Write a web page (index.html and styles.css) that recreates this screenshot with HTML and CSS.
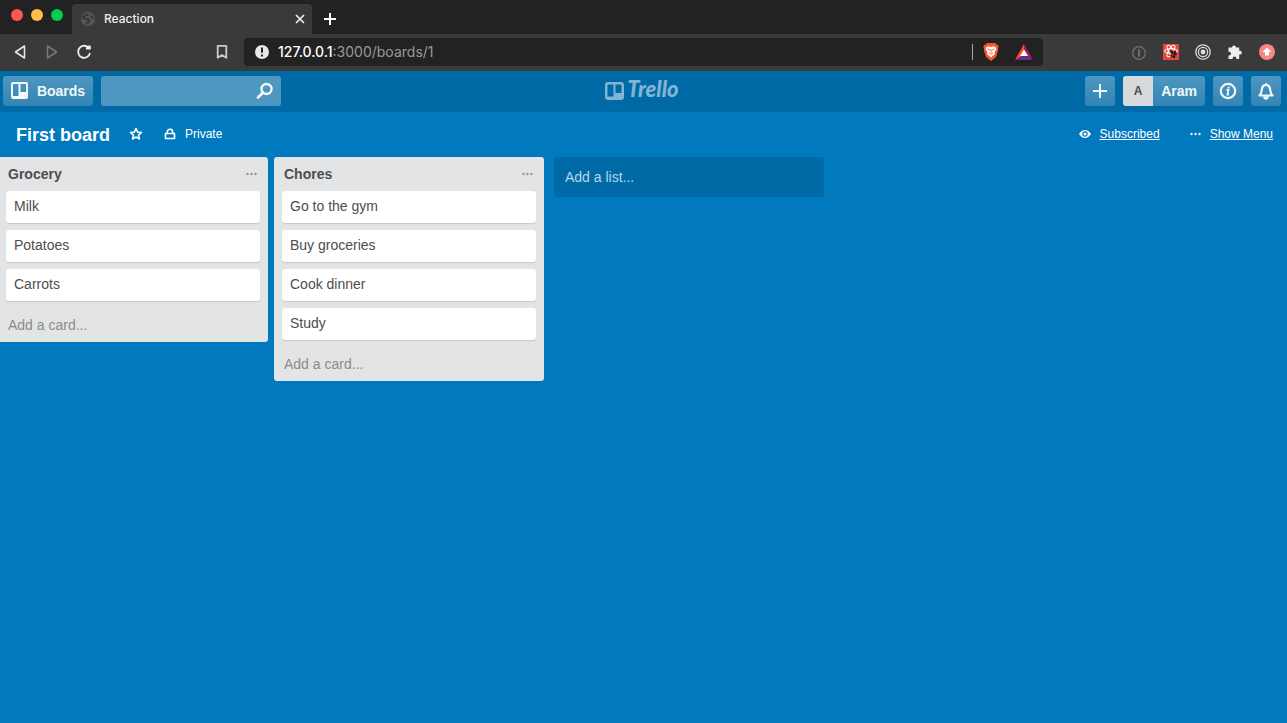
FILE: index.html
```html
<!DOCTYPE html>
<html lang="en">
<head>
<meta charset="utf-8">
<meta name="viewport" content="width=device-width, initial-scale=1">
<title>Reaction</title>
<link rel="stylesheet" href="styles.css">
</head>
<body>
<div class="tabs">
  <div class="lights"><button class="light red" aria-label="Close window"></button><button class="light amber" aria-label="Minimize"></button><button class="light green" aria-label="Zoom"></button></div>
  <div class="tab">
    <svg width="16" height="16" viewBox="0 0 16 16"><circle cx="8" cy="8" r="7" fill="#55585c"/><path d="M2 5.500Q4 2.500 8 2.500L9.500 3.500 8 5H6L5 7l4 .3 1.800 2L9.500 11l-1 2.500-3.500-.5 1-1.500 1.500-1-1-1.500-4.500-1zM11 4l2.500 2v2.500l-2-1-1.500-2z" fill="#38393b"/></svg>
    <span class="tab-title">Reaction</span>
    <button class="plain" aria-label="Close tab"><svg width="10" height="10" viewBox="0 0 10 10"><path d="M1 1l8 8M9 1L1 9" stroke="#eee" stroke-width="1.700"/></svg></button>
  </div>
  <button class="plain new-tab" aria-label="New tab"><svg width="12" height="12" viewBox="0 0 12 12"><path d="M6 0v12M0 6h12" stroke="#fff" stroke-width="2"/></svg></button>
</div>
<div class="toolbar">
  <div class="nav">
    <button class="plain" aria-label="Back"><svg width="16" height="16" viewBox="0 0 16 16"><path d="M12.500 2v12L3.500 8z" fill="none" stroke="#e4e4e4" stroke-width="1.600" stroke-linejoin="round"/></svg></button>
    <button class="plain" aria-label="Forward"><svg width="16" height="16" viewBox="0 0 16 16"><path d="M3.500 2v12L12.500 8z" fill="none" stroke="#777" stroke-width="1.600" stroke-linejoin="round"/></svg></button>
    <button class="plain" aria-label="Reload"><svg width="16" height="16" viewBox="0 0 16 16"><path d="M12 3.200A6 6 0 1 0 14 9" fill="none" stroke="#eee" stroke-width="1.800"/><path d="M10 5.500V3l2-1.500 2.800.2V5.500z" fill="#eee"/></svg></button>
  </div>
  <button class="plain bookmark" aria-label="Bookmark"><svg width="16" height="16" viewBox="0 0 16 16"><path d="M3.700 1.800h8.600v12L8 11l-4.300 2.800z" fill="none" stroke="#ccc" stroke-width="1.800" stroke-linejoin="round"/></svg></button>
  <div class="address">
    <svg width="14" height="14" viewBox="0 0 14 14"><circle cx="7" cy="7" r="7" fill="#e8e8e8"/><path d="M7 2.500v5.300M7 9.500v2" stroke="#222" stroke-width="2"/></svg>
    <span class="url"><b>127.0.0.1</b>:3000/boards/1</span>
    <span class="divider"></span>
    <svg class="shield" width="16" height="18" viewBox="0 0 16 18"><path d="M4 0h8l1.500 1.500L15 2l.7 2-.7 1 .2 2-2.200 7L8 18l-5-4L.8 7 1 5 .3 4 1 2l1.500-.5z" fill="#fb542b"/><path d="M3.500 4l2-.8L8 4l2.500-.8 2 .8 1 2.500-2 2.500.5 2-2.500 2L8 14.500 6.500 13 4 11l.5-2-2-2.500z" fill="#fff"/><path d="M4.500 6.200l2.300.8M11.500 6.200L9.200 7M8 6v3.500M6 10l2 1.200 2-1.200" stroke="#fb542b" stroke-width=".9" fill="none"/></svg>
    <svg width="18" height="16" viewBox="0 0 18 16"><path d="M9 0L0 16l9-5z" fill="#ff4b2f"/><path d="M9 0l9 16-9-5z" fill="#9e1f63"/><path d="M0 16h18l-9-5z" fill="#662d91"/><path d="M9 5.500l4 6.500H5z" fill="#fff"/></svg>
  </div>
  <div class="extensions">
    <svg width="16" height="16" viewBox="0 0 16 16"><circle cx="8" cy="9" r="6.300" fill="none" stroke="#707070" stroke-width="1.300"/><path d="M8 5.500v7" stroke="#707070" stroke-width="2"/></svg>
    <svg width="16" height="16" viewBox="0 0 16 16"><rect width="16" height="16" fill="#e5473f"/><g fill="none" stroke="#fff"><ellipse cx="8" cy="7" rx="6.500" ry="2.400"/><ellipse cx="8" cy="7" rx="6.500" ry="2.400" transform="rotate(60 8 7)"/><ellipse cx="8" cy="7" rx="6.500" ry="2.400" transform="rotate(120 8 7)"/></g><path d="M7 6.500l5 .5 2 2.500-2.500 5-4.500-2.500 1-2z" fill="#2b1717"/><path d="M8 10l5 2M11 6l-2 6" stroke="#e5473f" stroke-width=".6"/></svg>
    <svg width="16" height="16" viewBox="0 0 16 16"><g fill="none" stroke="#ddd" stroke-width="1.300"><circle cx="8" cy="8" r="7.200"/><circle cx="8" cy="8" r="4.600"/></g><circle cx="8" cy="8" r="2.400" fill="#ddd"/></svg>
    <svg width="16" height="16" viewBox="0 0 16 16"><path d="M1.500 3.500H5a2 2 0 0 1 4 0h3.200v3.300h.8a1.900 1.900 0 0 1 0 3.800h-.8V15H9.400v-.6a1.900 1.900 0 0 0-3.800 0v.6H1.500v-3.500h.6a1.900 1.900 0 0 0 0-3.800h-.6z" fill="#eee"/></svg>
    <svg width="16" height="16" viewBox="0 0 16 16"><circle cx="8" cy="8" r="8" fill="#f58682"/><path d="M8 3.500L12.500 8H10v3.500H6V8H3.500z" fill="#fff"/></svg>
  </div>
</div>
<header class="header">
  <div class="group">
    <button class="tile boards"><svg width="17" height="17" viewBox="0 0 17 17"><path fill-rule="evenodd" d="M2 0h13a2 2 0 0 1 2 2v13a2 2 0 0 1-2 2H2a2 2 0 0 1-2-2V2a2 2 0 0 1 2-2zM2 2v12h5.500V2zM9.500 2v8H15V2z" fill="#f2f7fa"/></svg>Boards</button>
    <form class="search"><input type="search" aria-label="Search"><button class="plain" type="button" aria-label="Submit search"><svg width="18" height="18" viewBox="0 0 18 18"><circle cx="10.500" cy="7" r="5" fill="none" stroke="#f2f7fa" stroke-width="2.400"/><path d="M7 10.500l-5 5" stroke="#f2f7fa" stroke-width="2.800" stroke-linecap="round"/></svg></button></form>
  </div>
  <a class="logo" href="#"><svg width="19" height="18" viewBox="0 0 19 18"><path fill-rule="evenodd" d="M3 0h13a3 3 0 0 1 3 3v12a3 3 0 0 1-3 3H3a3 3 0 0 1-3-3V3a3 3 0 0 1 3-3zM3.500 2.500a1 1 0 0 0-1 1v11h6v-12zM10.500 2.500v8.500h6V3.500a1 1 0 0 0-1-1z" fill="#80b5d3"/></svg><span>Trello</span></a>
  <div class="group right">
    <button class="tile" aria-label="Add"><svg width="14" height="14" viewBox="0 0 14 14"><path d="M7 0v14M0 7h14" stroke="#f2f7fa" stroke-width="2"/></svg></button>
    <button class="tile user"><span class="avatar">A</span><span class="name">Aram</span></button>
    <button class="tile" aria-label="Information"><svg width="18" height="18" viewBox="0 0 18 18"><circle cx="9" cy="9" r="7.200" fill="none" stroke="#f2f7fa" stroke-width="2.200"/><path d="M7.500 8h2l-1 4.500h1.500M9.700 4.800v1.600" stroke="#f2f7fa" stroke-width="1.800" fill="none"/></svg></button>
    <button class="tile" aria-label="Notifications"><svg width="18" height="18" viewBox="0 0 18 18"><path d="M2.500 13.500C5 11 4.500 9 5 6.500 5.400 4.400 7 3 9 3s3.600 1.400 4 3.500c.5 2.500 0 4.500 2.500 7z" fill="none" stroke="#f2f7fa" stroke-width="2.200" stroke-linejoin="round"/><path d="M9 1v2M7 15h4a2 2 0 0 1-4 0z" stroke="#f2f7fa" stroke-width="1.500" fill="#f2f7fa"/></svg></button>
  </div>
</header>
<main>
  <div class="board-header">
    <h1>First board</h1>
    <button class="plain star" aria-label="Star board"><svg width="14" height="14" viewBox="0 0 14 14"><path d="M7 1.500l1.600 3.600 3.900.4-2.900 2.600.8 3.900L7 10l-3.400 2 .8-3.900L1.500 5.500l3.900-.4z" fill="none" stroke="#fff" stroke-width="1.600" stroke-linejoin="round"/></svg></button>
    <button class="plain private"><svg width="12" height="12" viewBox="0 0 12 12"><path d="M1.500 5.500h9v5h-9zM3.300 5.500V4a2.700 2.700 0 0 1 5.400 0v1.500" fill="none" stroke="#fff" stroke-width="1.600" stroke-linejoin="round"/></svg>Private</button>
    <div class="board-links">
      <svg width="12" height="10" viewBox="0 0 12 10"><path fill-rule="evenodd" d="M0 5Q2.500 1 6 1t6 4Q9.500 9 6 9T0 5zM6 2.300a2.700 2.700 0 1 0 0 5.400 2.700 2.700 0 0 0 0-5.400z" fill="#fff"/><circle cx="6" cy="5" r="1.500" fill="#fff"/></svg>
      <a href="#">Subscribed</a>
      <svg class="more" width="11" height="4" viewBox="0 0 11 4"><g fill="#e8f3fa"><circle cx="1.500" cy="2" r="1.200"/><circle cx="5.500" cy="2" r="1.200"/><circle cx="9.500" cy="2" r="1.200"/></g></svg>
      <a href="#">Show Menu</a>
    </div>
  </div>
  <div class="lists">
    <section class="list">
      <div class="list-head"><h2>Grocery</h2><button class="plain" aria-label="Grocery actions"><svg width="11" height="4" viewBox="0 0 11 4"><g fill="#939393"><circle cx="1.500" cy="2" r="1.200"/><circle cx="5.500" cy="2" r="1.200"/><circle cx="9.500" cy="2" r="1.200"/></g></svg></button></div>
      <ul><li>Milk</li><li>Potatoes</li><li>Carrots</li></ul>
      <button class="plain add-card">Add a card...</button>
    </section>
    <section class="list">
      <div class="list-head"><h2>Chores</h2><button class="plain" aria-label="Chores actions"><svg width="11" height="4" viewBox="0 0 11 4"><g fill="#939393"><circle cx="1.500" cy="2" r="1.200"/><circle cx="5.500" cy="2" r="1.200"/><circle cx="9.500" cy="2" r="1.200"/></g></svg></button></div>
      <ul><li>Go to the gym</li><li>Buy groceries</li><li>Cook dinner</li><li>Study</li></ul>
      <button class="plain add-card">Add a card...</button>
    </section>
    <button class="plain add-list">Add a list...</button>
  </div>
</main>
</body>
</html>
```
FILE: styles.css
```css
* { box-sizing: border-box; }
body {
  margin: 0;
  min-height: 100vh;
  background: #0079bf;
  color: #4d4d4d;
  font: 14px/18px "Liberation Sans", Arial, sans-serif;
}
svg { display: block; flex: none; }
button, input { font: inherit; }
.plain { padding: 0; border: 0; background: none; color: inherit; cursor: pointer; }

.tabs { display: flex; height: 34px; background: #222; }
.lights { display: flex; gap: 8px; width: 72px; padding: 9px 0 0 11px; }
.light { width: 12px; height: 12px; padding: 0; border: 0; border-radius: 50%; }
.red { background: #ff5552; }
.amber { background: #ffbd4a; }
.green { background: #00ce4e; }
.tab {
  display: flex;
  align-items: center;
  gap: 8px;
  width: 240px;
  margin-top: 4px;
  padding: 0 7px 0 8px;
  border-radius: 4px 4px 0 0;
  background: #3a3a3a;
  color: #eee;
  font: 500 12px/16px Inter, sans-serif;
}
.tab-title { flex: 1; }
.new-tab { margin: 4px 0 0 12px; }

.toolbar {
  display: flex;
  align-items: center;
  height: 37px;
  padding: 0 12px 1px 0;
  background: #3a3a3a;
}
.nav { display: flex; gap: 16px; width: 214px; padding-left: 12px; }
.bookmark { margin-right: 14px; }
.address {
  display: flex;
  flex: 1;
  align-items: center;
  height: 28px;
  padding: 0 10px 0 11px;
  border-radius: 4px;
  background: #222;
}
.url { flex: 1; padding-left: 9px; color: #999; font: 14px/20px Inter, sans-serif; }
.url b { color: #fff; font-weight: 500; }
.divider { width: 1px; height: 16px; background: #aaa; }
.shield { margin: 0 16px 0 10px; }
.extensions { display: flex; gap: 16px; margin-left: 88px; }

.header {
  display: grid;
  grid-template-columns: 1fr auto 1fr;
  align-items: center;
  height: 41px;
  padding: 0 6px 2px 3px;
  background: #006aa7;
}
.group { display: flex; gap: 8px; }
.right { justify-content: flex-end; }
.tile {
  display: flex;
  align-items: center;
  justify-content: center;
  min-width: 30px;
  height: 30px;
  padding: 0;
  border: 0;
  border-radius: 3px;
  background: linear-gradient(#4d97c1, #3384b6);
  color: #f2f7fa;
  font-weight: 700;
}
.boards { gap: 9px; width: 90px; }
.search {
  display: flex;
  align-items: center;
  width: 180px;
  height: 30px;
  padding-right: 7px;
  border-radius: 3px;
  background: #4d97c1;
}
.search input { flex: 1; min-width: 0; border: 0; outline: 0; background: none; color: #fff; }
.logo {
  display: flex;
  align-items: center;
  gap: 3px;
  color: #80b5d3;
  font: italic 900 22px/24px Lato, sans-serif;
  text-decoration: none;
}
.logo span { padding-bottom: 3px; }
.user { overflow: hidden; }
.avatar { width: 30px; background: #d6dadc; color: #4d4d4d; font-size: 12px; line-height: 30px; }
.name { padding: 0 8px; }

.board-header {
  display: flex;
  align-items: center;
  height: 45px;
  padding: 0 14px 2px 16px;
  color: #fff;
  font-size: 12px;
}
h1 { margin: 0; padding-top: 2px; font-size: 18px; line-height: 24px; }
.star { margin: 0 21px 0 19px; }
.private { display: flex; align-items: center; gap: 9px; }
.board-links { display: flex; align-items: center; gap: 9px; margin-left: auto; }
.board-links a { color: #fff; }
.more { margin-left: 21px; }

.lists { display: flex; align-items: flex-start; gap: 6px; margin-left: -2px; }
.list { width: 270px; padding: 0 8px; border-radius: 3px; background: #e2e4e6; }
.list-head { display: flex; align-items: center; justify-content: space-between; height: 34px; padding: 0 3px 0 2px; }
h2 { margin: 0; font-size: 14px; line-height: 18px; }
ul { display: grid; gap: 7px; margin: 0; padding: 0; list-style: none; }
li { padding: 6px 8px 8px; border-radius: 3px; background: #fff; box-shadow: 0 1px 1px #c4c9cc; }
.add-card { display: block; width: 100%; padding: 15px 2px 8px; color: #8c8c8c; text-align: left; line-height: 18px; }
.add-list {
  width: 270px;
  height: 40px;
  margin-left: 4px;
  padding: 0 11px;
  border-radius: 3px;
  background: #006aa7;
  color: #b9d6e8;
  text-align: left;
}
```
